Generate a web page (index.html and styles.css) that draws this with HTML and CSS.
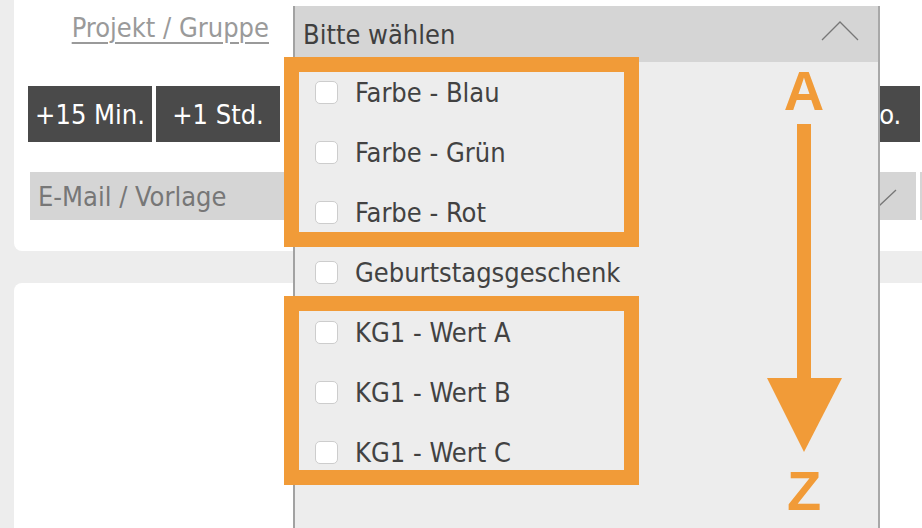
FILE: index.html
```html
<!DOCTYPE html>
<html lang="de">
<head>
  <meta charset="UTF-8" />
  <meta name="viewport" content="width=device-width, initial-scale=1.0"/>
  <title>Projekt / Gruppe</title>
  <link rel="stylesheet" href="styles.css">
</head>
<body>
  <div class="page">
    <section class="card card-top">
      <div class="row project-row">
        <a class="field-label" href="#">Projekt / Gruppe</a>

        <div class="multiselect">
          <div class="ms-header">
            <span>Bitte wählen</span>
            <svg class="chevron-up" width="38" height="20" viewBox="0 0 38 20">
              <polyline points="1,19 19,1 37,19" fill="none" stroke="#777" stroke-width="1.3"/>
            </svg>
          </div>

          <ul class="ms-list">
            <li><input type="checkbox" /><span>Farbe - Blau</span></li>
            <li><input type="checkbox" /><span>Farbe - Grün</span></li>
            <li><input type="checkbox" /><span>Farbe - Rot</span></li>
            <li><input type="checkbox" /><span>Geburtstagsgeschenk</span></li>
            <li><input type="checkbox" /><span>KG1 - Wert A</span></li>
            <li><input type="checkbox" /><span>KG1 - Wert B</span></li>
            <li><input type="checkbox" /><span>KG1 - Wert C</span></li>

            <!-- annotation overlay -->
            <div class="mark mark-colors"></div>
            <div class="mark mark-kg"></div>
            <svg class="sort-arrow" width="120" height="466" viewBox="0 0 120 466">
              <text x="63" y="48" text-anchor="middle">A</text>
              <rect x="56" y="62" width="14" height="258" />
              <polygon points="26,316 101,316 63,390" />
              <text x="63" y="448" text-anchor="middle">Z</text>
            </svg>
          </ul>
        </div>
      </div>

      <div class="row quick-buttons">
        <button>+15 Min.</button>
        <button>+1 Std.</button>
        <button>+3 Std.</button>
        <button>+1 Tag</button>
        <button>+2 Tage</button>
        <button>+1 Wo.</button>
        <button>+1 Mo.</button>
        <button>+1 J.</button>
      </div>

      <div class="row template-row">
        <div class="combo">
          <span class="placeholder">E-Mail / Vorlage</span>
          <svg class="chevron-down" width="34" height="17" viewBox="0 0 34 17">
            <polyline points="1,1 17,16 33,1" fill="none" stroke="#777" stroke-width="1.3"/>
          </svg>
        </div>
        <div class="combo combo-small"></div>
      </div>
    </section>

    <section class="card card-bottom"></section>
  </div>
</body>
</html>
```

FILE: styles.css
```css
body {
  margin: 0;
  background: #ededed;
  font-family: "DejaVu Sans Condensed", "DejaVu Sans", sans-serif;
  font-stretch: condensed;
  color: #444;
  overflow: hidden;
  height: 528px;
}
.page {
  width: 1100px;
}
.card {
  background: #fff;
  margin-left: 14px;
  padding-left: 14px;
}
.card-top {
  padding-top: 6px;
  padding-bottom: 31px;
  border-radius: 0 0 8px 8px;
}
.card-bottom {
  margin-top: 32px;
  height: 400px;
  border-radius: 8px 8px 0 0;
}
.row {
  display: flex;
}

/* Projekt / Gruppe */
.project-row {
  height: 56px;
  position: relative;
  z-index: 2;
}
.field-label {
  width: 241px;
  margin-right: 24px;
  padding-top: 6px;
  text-align: right;
  font-size: 27px;
  color: #9a9a9a;
  text-decoration: underline;
  text-decoration-thickness: 1.5px;
  text-underline-offset: 5px;
}
.multiselect {
  width: 587px;
  position: relative;
}
.ms-header {
  height: 56px;
  box-sizing: border-box;
  display: flex;
  align-items: center;
  justify-content: space-between;
  padding: 0 19px 0 8px;
  background: #d5d5d5;
  border-left: 2px solid #a2a2a2;
  border-right: 2px solid #a8a8a8;
  font-size: 27px;
  color: #3f3f3f;
}
.chevron-up {
  margin-bottom: 6px;
}
.ms-list {
  position: absolute;
  top: 56px;
  left: 0;
  right: 0;
  height: 480px;
  margin: 0;
  padding: 0 0 0 20px;
  list-style: none;
  background: #ededed;
  border-left: 2px solid #a2a2a2;
  border-right: 2px solid #a8a8a8;
}
.ms-list li {
  height: 60px;
  display: flex;
  align-items: center;
  font-size: 27px;
  color: #424242;
}
.ms-list input {
  appearance: none;
  width: 23px;
  height: 23px;
  margin: 0 17px 0 0;
  background: #fff;
  border: 1px solid #cdcdcd;
  border-radius: 5px;
}

/* orange annotations */
.mark {
  position: absolute;
  left: -11px;
  width: 355px;
  box-sizing: border-box;
  border: 15px solid #f19b38;
}
.mark-colors {
  top: -5px;
  height: 190px;
}
.mark-kg {
  top: 234px;
  height: 189px;
}
.sort-arrow {
  position: absolute;
  left: 446px;
  top: 0;
  fill: #f19b38;
}
.sort-arrow text {
  font-family: "Liberation Sans", sans-serif;
  font-weight: bold;
  font-size: 56px;
}

/* quick buttons */
.quick-buttons {
  margin-top: 24px;
  gap: 4px;
}
.quick-buttons button {
  flex: 0 0 124px;
  height: 56px;
  border: 0;
  padding: 0;
  background: #4a4a4a;
  color: #fff;
  font-family: inherit;
  font-stretch: condensed;
  font-size: 27px;
}

/* E-Mail / Vorlage */
.template-row {
  margin-top: 30px;
  margin-left: 2px;
  gap: 4px;
}
.combo {
  flex: 0 0 886px;
  height: 48px;
  box-sizing: border-box;
  display: flex;
  align-items: center;
  justify-content: space-between;
  padding: 0 19px 0 8px;
  background: #d5d5d5;
}
.combo-small {
  flex-basis: 120px;
}
.placeholder {
  font-size: 27px;
  color: #777;
}
.chevron-down {
  margin-top: 2px;
}
```
